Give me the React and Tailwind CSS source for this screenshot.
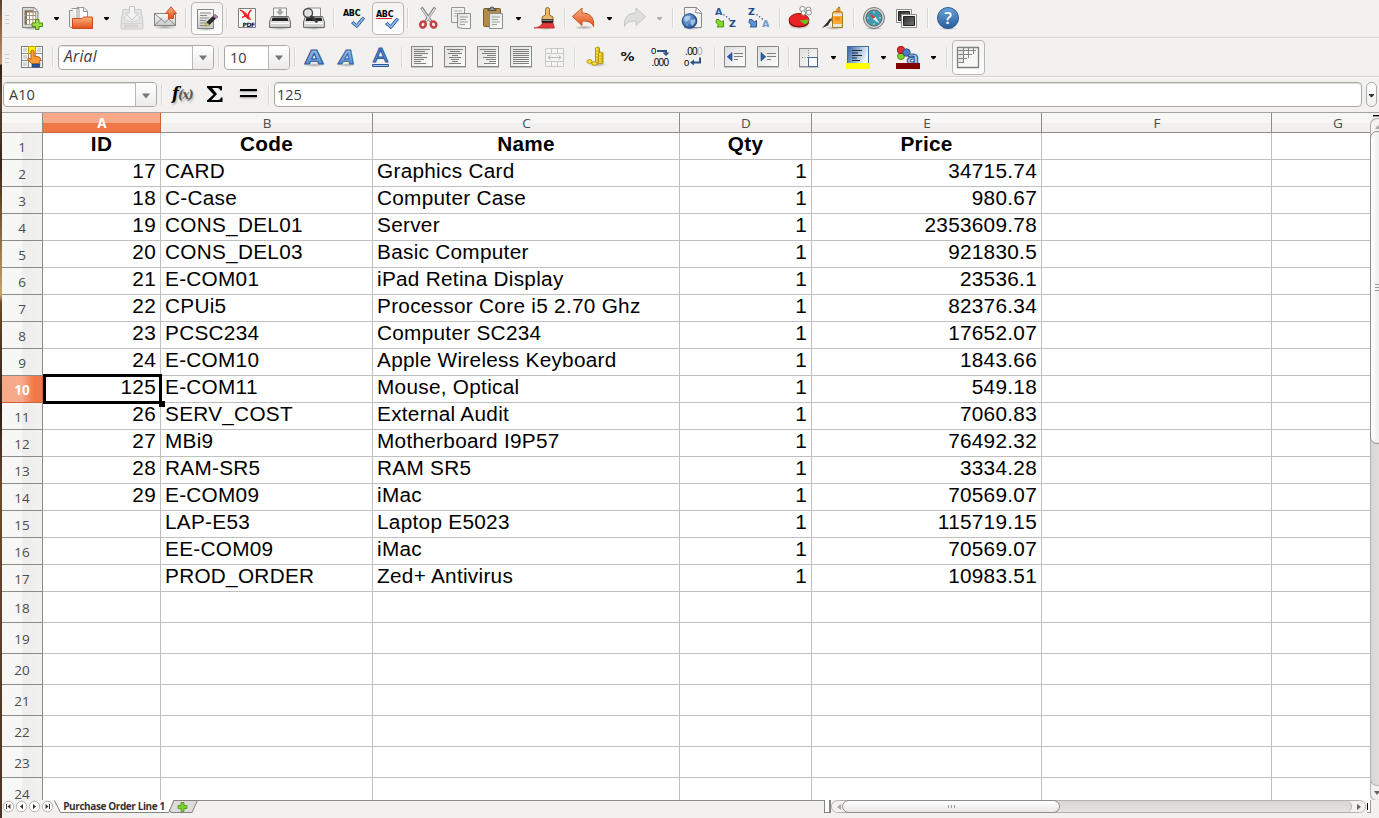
import React from "react";

const UI = "font-['Open_Sans','Noto_Sans',sans-serif]";

const Icon = ({ className = "", children }) => (
  <svg viewBox="0 0 24 24" className={`h-6 w-6 shrink-0 overflow-visible ${className}`} fill="none">
    {children}
  </svg>
);
const Grip = () => (
  <div className="ml-[3px] flex w-1 shrink-0 flex-col gap-[3px] pt-[3px]">
    <i className="h-px bg-[#cfcdca]" /><i className="h-px bg-[#cfcdca]" /><i className="h-px bg-[#cfcdca]" />
  </div>
);
const Sep = ({ className = "" }) => (
  <div className={`h-5 w-[2px] shrink-0 border-l border-r border-l-[#d8d6d3] border-r-[#f9f9f8] ${className}`} />
);
const Arrow = ({ className = "", fill = "#000" }) => (
  <svg viewBox="0 0 8 6" className={`-mt-px h-[6px] w-2 shrink-0 ${className}`}><path d="M2 2h5v1L5 5.2H4L2 3z" fill={fill} /></svg>
);
const Tri = () => (
  <svg viewBox="0 0 10 6" className="h-[6px] w-[10px]"><path d="M1 .5h8L5 5.6z" fill="#777" /></svg>
);
const Toggle = ({ className = "", children }) => (
  <div className={`-mb-px flex shrink-0 items-center justify-center rounded-[4px] border border-[#bab7b3] bg-gradient-to-b from-[#f4f3f2] to-[#fdfdfd] ${className}`}>
    {children}
  </div>
);
const Combo = ({ className = "", arrow = "w-[21px]", children }) => (
  <div className={`flex h-[25px] shrink-0 overflow-hidden rounded-[4px] border border-[#aba8a4] bg-white ${className}`}>
    <div className="flex min-w-0 flex-1 items-center pl-[5px] text-[#3c3c3c] shadow-[inset_0_1px_1px_#ddd]">{children}</div>
    <div className={`flex shrink-0 items-center justify-center border-l border-[#bbb8b4] bg-gradient-to-b from-white to-[#ecebea] pt-[2px] ${arrow}`}><Tri /></div>
  </div>
);

const Defs = () => (
  <svg className="absolute h-0 w-0">
    <defs>
      <linearGradient id="or" x1="0" y1="0" x2="0" y2="1"><stop offset="0" stopColor="#fbb184" /><stop offset="1" stopColor="#e2521b" /></linearGradient>
      <linearGradient id="gr" x1="0" y1="0" x2="0" y2="1"><stop offset="0" stopColor="#fbfbfb" /><stop offset="1" stopColor="#c9c9c9" /></linearGradient>
      <linearGradient id="doc" x1="0" y1="0" x2="1" y2="1"><stop offset="0" stopColor="#dcdeda" /><stop offset="1" stopColor="#fff" /></linearGradient>
      <linearGradient id="bl" x1="0" y1="0" x2="0" y2="1"><stop offset="0" stopColor="#a9c8ec" /><stop offset="1" stopColor="#4b84c6" /></linearGradient>
      <linearGradient id="bw" x1="0" y1="0" x2="1" y2="0.3"><stop offset="0" stopColor="#2f62a5" /><stop offset="1" stopColor="#f4f8fc" /></linearGradient>
      <linearGradient id="hp" x1="0" y1="0" x2="0" y2="1"><stop offset="0" stopColor="#6aa3d8" /><stop offset="1" stopColor="#285d98" /></linearGradient>
      <linearGradient id="dk" x1="0" y1="0" x2="1" y2="1"><stop offset="0" stopColor="#2c2c2c" /><stop offset="1" stopColor="#777" /></linearGradient>
      <linearGradient id="ye" x1="0" y1="0" x2="1" y2="0"><stop offset="0" stopColor="#fff36b" /><stop offset="1" stopColor="#d5ae00" /></linearGradient>
      <radialGradient id="gl" cx=".35" cy=".35" r=".7"><stop offset="0" stopColor="#8fb9e8" /><stop offset="1" stopColor="#1e4f93" /></radialGradient>
      <radialGradient id="sh"><stop offset="0" stopColor="#000" stopOpacity=".3" /><stop offset="1" stopColor="#000" stopOpacity="0" /></radialGradient>
    </defs>
  </svg>
);

const Check = () => (
  <path d="M9.500 17.200l2.200-1.700 2.800 2.800 6-7.100 2.100 1.300-7.500 9.200z" fill="#8ab4e5" stroke="#2c5ca0" strokeWidth="1" strokeLinejoin="round" />
);
const Printer = () => (
  <>
    <ellipse cx="12" cy="22" rx="11" ry="2" fill="url(#sh)" />
    <path d="M5.500 2h13v11h-13z" fill="#f7f7f7" stroke="#8d8f8a" />
    <path d="M3.500 10.500L1.500 16v5.500h21V16l-2-5.500z" fill="url(#gr)" stroke="#6c6e69" />
    <path d="M4.500 11.500h15l1 3.500H3.500z" fill="#242424" />
    <path d="M3 17.500h18" stroke="#fff" />
  </>
);
const Align = ({ rows, className = "" }) => (
  <Icon className={className}>
    <path d="M1 22.500h22" stroke="#c6c4c2" />
    <rect x="1.500" y="1.500" width="21" height="20" fill="url(#doc)" stroke="#858883" />
    {rows.map(([a, b], i) => <path key={i} d={`M${a} ${4.5 + i * 2}H${b}`} stroke="#7c7f7a" />)}
  </Icon>
);
const SheetLines = () => <path d="M1.500 1.500h21v20h-21z" fill="url(#doc)" stroke="#858883" />;
const SortIcon = ({ a, b, arrowFill, arrowStroke, ca, cb, className }) => (
  <Icon className={className}>
    <text x="1" y="8.500" fontFamily="DejaVu Sans" fontWeight="bold" fontSize="9.500" fill={ca}>{a}</text>
    <text x="15" y="21" fontFamily="DejaVu Sans" fontWeight="bold" fontSize="9.500" fill={cb}>{b}</text>
    <path d="M9.500 8.500l7 5.500" stroke="#2a4f86" strokeWidth="1.300" strokeDasharray="1.300 2" />
    <path d="M2.500 13.500h2.500l2.500 2.500 2-1.500v6.500h-6.500l1.500-2-2.500-2.500z" fill={arrowFill} stroke={arrowStroke} strokeWidth=".9" />
  </Icon>
);

const Help = () => (
  <Icon className="ml-[7px]">
    <ellipse cx="12" cy="22.500" rx="10" ry="1.500" fill="url(#sh)" />
    <circle cx="12" cy="12" r="10.500" fill="url(#hp)" stroke="#285a93" />
    <text x="12" y="18" textAnchor="middle" fontFamily="Open Sans" fontWeight="600" fontSize="17" fill="#fff">?</text>
  </Icon>
);

const TopBar = () => (
  <div className="flex h-[38px] items-center border-b border-[#d3d1ce] pb-px">
    <Grip />
    <Icon className="ml-[11px]">
      <ellipse cx="11" cy="22" rx="10" ry="2" fill="url(#sh)" />
      <path d="M2.500 1.500h12l3.500 4v16h-15.500z" fill="#d6d7d3" stroke="#82847f" />
      <path d="M4.500 4.500h11v14h-11z" fill="#fff" stroke="#a8aaa5" />
      <path d="M5 5.500h11M6 5v13.500" stroke="#8a7050" strokeWidth="2" />
      <path d="M9.500 5v13M13 5v13M5 9.500h11M5 13.500h11" stroke="#a29278" />
      <path d="M13.500 1.500l4.500 4h-4.500z" fill="#fff" stroke="#92948f" strokeWidth=".7" />
      <path d="M15.500 13.500h3.500v3.500h3.500v3.500h-3.500v3h-3.500v-3h-3.500v-3.500h3.500z" fill="#9edb45" stroke="#4c8c12" />
    </Icon>
    <Arrow className="ml-2" />
    <Icon className="ml-[9px]">
      <path d="M.5 4.500h10v17H2q-1.500 0-1.500-2z" fill="#ececeb" stroke="#8e8e8a" />
      <path d="M2.500 2.500h7.500v12M8 1.500h7l3.500 3.500v8H8z" fill="#fff" stroke="#999b96" />
      <path d="M14.500 1.500v4h4" stroke="#999b96" />
      <path d="M3.500 22.500v-10h9.500l1.500-1.500h8.500l.5 1v10.500z" fill="url(#or)" stroke="#cd4a18" />
    </Icon>
    <Arrow className="ml-[9px]" />
    <Icon className="ml-[10px]">
      <g opacity=".55">
        <path d="M3 3.500h18l2 14.500v4q0 1-1 1H2q-1 0-1-1v-4z" fill="#ddd" stroke="#adadab" />
        <path d="M1.500 17.500h21" stroke="#bbb" /><rect x="4" y="18.500" width="14" height="3" fill="#bcbcba" />
        <ellipse cx="12" cy="12" rx="7.500" ry="3.500" fill="#eee" stroke="#bbb" />
        <path d="M9.500.5h5v6.500h4L12 14 5.500 7h4z" fill="#f8f8f8" stroke="#a8a8a6" />
      </g>
    </Icon>
    <Icon className="ml-[9px]">
      <ellipse cx="12" cy="21" rx="12" ry="2.500" fill="url(#sh)" />
      <rect x="1.500" y="7.500" width="21" height="12" fill="url(#gr)" stroke="#858782" />
      <path d="M2 19l7-6.500M22 19l-7-6.500M2 8l10 8.500L22 8" stroke="#888" />
      <path d="M15.500 12.500v-5h-3L18 .8l5.500 6.700h-3v5z" fill="url(#or)" stroke="#d5501d" />
    </Icon>
    <Sep className="ml-2" />
    <Toggle className="ml-1 h-[33px] w-8">
      <Icon>
        <ellipse cx="11" cy="22" rx="10" ry="2" fill="url(#sh)" />
        <path d="M2.500 2.500h16v19h-16z" fill="url(#gr)" stroke="#858782" />
        <path d="M5 6h11M5 8.500h7M5 11h9M5 13.500h6M5 16h8M5 18.500h5" stroke="#8a8c88" />
        <path d="M10.500 19l1-4L18 9l3 2.500-6.500 6.500z" fill="#2a2a2a" />
        <path d="M10.200 19.300l1.300-4 3 2.700z" fill="#e9d35b" stroke="#8a7a2a" strokeWidth=".5" />
        <path d="M18 9l2-1.700 3 2.500-2 1.700z" fill="#c878b8" stroke="#774470" strokeWidth=".6" />
      </Icon>
    </Toggle>
    <Sep className="ml-[3px]" />
    <Icon className="ml-[7px]">
      <path d="M3.500 2.500h17v19h-17z" fill="#fafafa" stroke="#7e807b" />
      <path d="M5 4c4 1 8 4.500 10.500 9.500-3-.5-5-2.500-6-4.500C8.500 7 7 5 5 4z" fill="#e22" stroke="#e22" />
      <path d="M16.500 4c-2 1-3.500 4-3 6.500M12 8c-2 2-3 3-5 3.500" stroke="#e22" strokeWidth="1.500" />
      <text x="7.500" y="20.500" fontFamily="DejaVu Sans" fontWeight="bold" fontSize="6" fill="#111" textLength="12.500">PDF</text>
    </Icon>
    <Icon className="ml-[9px]"><Printer /><path d="M10.500 3h3v2.500H16L12 9.500 8 5.500h2.500z" fill="#a4a6a2" /></Icon>
    <Icon className="ml-[10px]">
      <Printer /><circle cx="6" cy="7" r="4.500" fill="#dfe3e6" fillOpacity=".85" stroke="#4b4b4b" strokeWidth="1.500" /><path d="M9.500 10.500l5 5" stroke="#3a3a3a" strokeWidth="2.500" strokeLinecap="round" />
    </Icon>
    <Sep className="ml-[7px]" />
    <Icon className="ml-[7px]">
      <text x="1" y="9.500" fontFamily="DejaVu Sans" fontWeight="bold" fontSize="8" fill="#000" textLength="17.500">ABC</text><Check />
    </Icon>
    <Toggle className="ml-[6px] h-[33px] w-8">
      <Icon>
        <text x="0" y="9.500" fontFamily="DejaVu Sans" fontWeight="bold" fontSize="8" fill="#000" textLength="17.500">ABC</text>
        <path d="M0 11l1 1 1-1 1 1 1-1 1 1 1-1 1 1 1-1 1 1 1-1 1 1 1-1 1 1 1-1 1 1 1-1" stroke="#d11" strokeWidth=".9" /><Check />
      </Icon>
    </Toggle>
    <Sep className="ml-[3px]" />
    <Icon className="ml-2">
      <path d="M4.500 1.500l9.500 14M18 1.500l-9.500 14" stroke="#808280" strokeWidth="3" />
      <path d="M4.800 2.500l9 13M17.700 2.500l-9 13" stroke="#e9e9e8" strokeWidth="1.300" />
      <ellipse cx="6" cy="18.500" rx="2.700" ry="3.100" stroke="#c5403d" strokeWidth="2.500" transform="rotate(25 6 18.500)" />
      <ellipse cx="16.500" cy="18.500" rx="2.700" ry="3.100" stroke="#c5403d" strokeWidth="2.500" transform="rotate(-25 16.500 18.500)" />
    </Icon>
    <Icon className="ml-2">
      <path d="M2.500 1.500h13v15h-13z" fill="#f2f2f1" stroke="#969893" /><path d="M5 5h8M5 7.500h8M5 10h3" stroke="#b0b2ae" />
      <path d="M8.500 7.500h13v15h-8l-5-1z" fill="url(#doc)" stroke="#8c8e89" /><path d="M11 11h8M11 13.500h6M11 16h8M11 18.500h5" stroke="#a3a5a0" />
    </Icon>
    <Icon className="ml-2">
      <rect x="2.500" y="2.500" width="17" height="18" rx="1" fill="#b48a4b" stroke="#7d5b28" />
      <path d="M7 4.500V3h2q0-2 2-2t2 2h2v1.500z" fill="#909290" stroke="#4d4f4c" />
      <path d="M8.500 7.500h13v15h-13z" fill="url(#doc)" stroke="#8c8e89" /><path d="M11 11h8M11 13.500h6M11 16h8M11 18.500h5" stroke="#a3a5a0" />
    </Icon>
    <Arrow className="ml-[9px]" />
    <Icon className="ml-[11px]">
      <ellipse cx="13" cy="22" rx="10" ry="2" fill="url(#sh)" />
      <path d="M12.500 9V3.500q0-2 2-2t2 2V9l3.500 2v3h-11v-3z" fill="#e9b66a" stroke="#9a6a26" />
      <path d="M9 13.500h11v3h-11z" fill="#ececec" stroke="#444" /><path d="M9 14.500h11v2.500h-11z" fill="#222" />
      <path d="M9.500 17H20l1.500 5H1c4-.5 7-2 8.500-5z" fill="#e23a3a" stroke="#b81d1d" strokeWidth=".6" />
    </Icon>
    <Sep className="ml-[7px]" />
    <Icon className="ml-[6px]">
      <ellipse cx="12" cy="21.500" rx="10" ry="2" fill="url(#sh)" />
      <path d="M.5 10.500L10 2v5c8 0 12.500 4.500 11.500 13.500-1.500-4-5-5.500-11.500-5.500v4.500z" fill="url(#or)" stroke="#c4541e" strokeLinejoin="round" />
    </Icon>
    <Arrow className="ml-[9px]" />
    <Icon className="ml-[10px]">
      <path d="M22.500 10.500L13 2v5C5 7 .5 11.500 1.500 20.500c1.500-4 5-5.500 11.500-5.500v4.500z" fill="#dfdfde" stroke="#c5c5c3" strokeLinejoin="round" />
    </Icon>
    <Arrow className="ml-2" fill="#b3b1af" />
    <Sep className="ml-[9px]" />
    <Icon className="ml-[6px]">
      <ellipse cx="12" cy="22" rx="10" ry="2" fill="url(#sh)" />
      <path d="M4.500 1.500h12l5 5v15h-17z" fill="#f2f2f1" stroke="#858782" /><path d="M16.500 1.500l-1 5 6 1" fill="#fff" stroke="#858782" />
      <circle cx="9.500" cy="15" r="7.300" fill="url(#gl)" stroke="#1d4787" />
      <path d="M4 11.500q3-3 6.500-1l-1 3-3 2-2-1zM11 14l4-1 .5 3-3 4-2-2zM6 17l2 2-1 1z" fill="#c4dbf3" fillOpacity=".7" />
    </Icon>
    <SortIcon className="ml-[10px]" a="A" b="Z" arrowFill="#7fdb28" arrowStroke="#438c0c" ca="#2f5c9c" cb="#1f4a88" />
    <SortIcon className="ml-[9px]" a="Z" b="A" arrowFill="#5d93d8" arrowStroke="#1f4a88" ca="#1f4a88" cb="#6e9bd2" />
    <Sep className="ml-2" />
    <Icon className="ml-[7px]">
      <ellipse cx="11" cy="20.500" rx="11" ry="3" fill="url(#sh)" />
      <path d="M1 14v2.500c1 6.500 19 6.500 20 0V14z" fill="#8e0f0f" />
      <ellipse cx="11" cy="14" rx="10" ry="6.500" fill="#ea2424" stroke="#a01010" /><path d="M11.500 14.500l9.500-1q-.5 3.500-4 5z" fill="#62c71c" />
      <circle cx="14.500" cy="3" r="2.700" fill="#fff" stroke="#8c8e89" /><circle cx="20.500" cy="3.500" r="2.400" fill="#fff" stroke="#8c8e89" /><circle cx="15.500" cy="7" r="2.200" fill="#fff" stroke="#8c8e89" /><circle cx="21" cy="6.500" r="2.500" fill="#fff" stroke="#8c8e89" />
    </Icon>
    <Icon className="ml-[9px]">
      <ellipse cx="13" cy="22" rx="10" ry="2" fill="url(#sh)" />
      <path d="M18.500 1l-9 14" stroke="#a66a2c" strokeWidth="2" /><path d="M10.500 13.500L7 19.500 1 22l4.500-5 3.500-4.500z" fill="#333" />
      <path d="M14.500 5.500h5v-3h-4z" fill="#e7942c" /><path d="M11.500 7.500q0-2 2-2h6q2 0 2 2v14h-10z" fill="#f3a93c" stroke="#a8771f" /><path d="M12 7.500h9v2.500h-9zM12 18h9v3h-9z" fill="#e4e4e2" /><path d="M14 11h5v3.500h-5z" fill="#f58a0d" />
    </Icon>
    <Sep className="ml-2" />
    <Icon className="ml-[7px]">
      <ellipse cx="12" cy="22.500" rx="10" ry="1.500" fill="url(#sh)" />
      <circle cx="12" cy="12" r="10.500" fill="#d2d3d1" stroke="#7b7d79" /><circle cx="12" cy="12" r="8" fill="#3c9bb0" stroke="#5d6665" />
      <path d="M12 5v2M12 17v2M5 12h2M17 12h2" stroke="#c4e6ec" />
      <path d="M6.500 6.500l7 4.500-2.500 2z" fill="#e03c3c" /><path d="M17.500 17.500l-4-6.500-2.500 2z" fill="#f1f3f3" />
    </Icon>
    <Icon className="ml-[9px]">
      <path d="M1.500 3.500h15v13h-15z" fill="#fdfdfd" stroke="#8d8f8b" /><path d="M3.500 5.500h11v9h-11z" fill="url(#dk)" stroke="#222" />
      <path d="M6.500 8.500h15v13h-15z" fill="#fdfdfd" stroke="#8d8f8b" /><path d="M8.500 10.500h11v9h-11z" fill="url(#dk)" stroke="#222" />
    </Icon>
    <Sep className="ml-2" />
    <Help />
  </div>
);

const FormatBar = () => (
  <div className="flex h-[39px] items-center border-t border-b border-t-[#fbfbfa] border-b-[#d3d1ce] pb-px">
    <Grip />
    <Icon className="ml-[11px]">
      <rect x="1.500" y="1.500" width="21" height="21" fill="#fbfbfb" stroke="#7c7e79" />
      <path d="M3 3h4v4H3zM17 3h4v4h-4zM3 10h4v4H3zM3 17h4v4H3zM17 17h4v4h-4z" fill="#d4d6d2" />
      <path d="M8.500 2v20M15.500 2v20M2 8.500h20M2 15.500h20" stroke="#8a8c87" />
      <rect x="8.500" y="1.500" width="7" height="7" fill="#fff200" stroke="#c7a500" />
      <path d="M11 14V6q1.500-1.500 3 0v5l5 1q1.500.5 1.500 2l-1.500 5h-7l-4.500-5q1-1.500 2-.5z" fill="#ff9b33" stroke="#cb5d10" />
      <path d="M12 19h7.500v3H12z" fill="#285a9c" stroke="#17396b" strokeWidth=".7" />
    </Icon>
    <Sep className="ml-2" />
    <Combo className="ml-1 w-[156px]"><span className="text-[15.5px] tracking-[0.3px] italic">Arial</span></Combo>
    <Sep className="ml-1" />
    <Combo className="ml-1 w-[66px]"><span className="pt-px text-[14.5px]">10</span></Combo>
    <Sep className="ml-1" />
    <Icon className="ml-[6px]">
      <ellipse cx="12" cy="20" rx="11" ry="2" fill="url(#sh)" />
      <text x="2.500" y="18.500" fontFamily="DejaVu Sans" fontWeight="bold" fontSize="19" textLength="19" lengthAdjust="spacingAndGlyphs" fill="url(#bl)" stroke="#2a5a9e" strokeWidth=".9">A</text>
    </Icon>
    <Icon className="ml-[10px]">
      <ellipse cx="11" cy="20" rx="9" ry="2" fill="url(#sh)" />
      <text x="3" y="18.500" fontFamily="DejaVu Sans" fontStyle="italic" fontWeight="bold" fontSize="19" textLength="16" lengthAdjust="spacingAndGlyphs" fill="url(#bl)" stroke="#2a5a9e" strokeWidth=".9">A</text>
    </Icon>
    <Icon className="ml-[9px]">
      <text x="4" y="16.500" fontFamily="DejaVu Sans" fontSize="19" textLength="15" lengthAdjust="spacingAndGlyphs" fill="#6b9cd6" stroke="#2a5a9e" strokeWidth="1">A</text>
      <path d="M3.500 19.500h16v2h-16z" fill="#9ec1ea" stroke="#2a5a9e" />
    </Icon>
    <Sep className="ml-2" />
    <Align className="ml-[7px]" rows={[[4, 20], [4, 15], [4, 18], [4, 12], [4, 17], [4, 14], [4, 11], [4, 16]]} />
    <Align className="ml-[9px]" rows={[[4, 20], [7, 17], [5, 19], [9, 15], [6, 18], [8, 16], [9, 15], [6, 18]]} />
    <Align className="ml-[9px]" rows={[[4, 20], [8, 20], [6, 20], [11, 20], [7, 20], [10, 20], [13, 20], [8, 20]]} />
    <Align className="ml-[9px]" rows={[[4, 20], [4, 20], [4, 20], [4, 20], [4, 20], [4, 20], [4, 20], [4, 20]]} />
    <Icon className="ml-[10px]">
      <path d="M2.500 3.500h18v18h-18zM2.500 8.500h18M2.500 16.500h18M8.500 3.500v5m6-5v5m-6 8v5m6-5v5" fill="#f4f4f3" stroke="#c9c9c7" />
      <path d="M5 12.500h13M7.500 10.500l-2.500 2 2.500 2M15.500 10.500l2.500 2-2.500 2" stroke="#b9b9b7" />
    </Icon>
    <Sep className="ml-[7px]" />
    <Icon className="ml-2">
      <ellipse cx="13" cy="19.500" rx="10" ry="2.500" fill="url(#sh)" />
      <path d="M11.500 3q2-2 4 0v15h-4z" fill="url(#ye)" stroke="#b39300" /><path d="M14.500 8q2-2 4.500 0v10q-2.500 1.500-4.500 0z" fill="url(#ye)" stroke="#b39300" />
      <path d="M12 6h3M12 9h3M12 12h3M12 15h3M15 11h4M15 13.500h4M15 16h4" stroke="#c1a000" strokeWidth=".6" />
      <ellipse cx="5.500" cy="16.500" rx="2.600" ry="1.800" fill="#ffe633" stroke="#b39300" /><ellipse cx="10.500" cy="18.500" rx="2.600" ry="1.800" fill="#ffe633" stroke="#b39300" />
    </Icon>
    <Icon className="ml-2"><text x="4.500" y="16" fontFamily="DejaVu Sans" fontWeight="bold" fontSize="13" textLength="14" lengthAdjust="spacingAndGlyphs" fill="#111">%</text></Icon>
    <Icon className="ml-[9px] [font-family:'Liberation_Sans']">
      <text x="2" y="9" fontSize="9.500" fill="#000">0</text><text x="2.500" y="20.500" fontSize="10" textLength="17.500" fill="#000">.000</text>
      <path d="M8 5h10v2.500h2.500L17 11l-3.500-3.500H16V7H8z" fill="#31537f" />
    </Icon>
    <Icon className="ml-[9px] [font-family:'Liberation_Sans']">
      <text x="3" y="9.500" fontSize="10" textLength="17.500" fill="#000">.00<tspan fill="#aaa">0</tspan></text><text x="2" y="20.500" fontSize="9.500" fill="#000">0</text>
      <path d="M19 12.500v6h-7v2l-4-3 4-3v2h5v-4z" fill="#31537f" />
    </Icon>
    <Sep className="ml-2" />
    <Icon className="ml-[7px]"><path d="M1 22.500h22" stroke="#c6c4c2" /><SheetLines /><path d="M9 7.500v8.500l-4.800-4.200z" fill="#2b5ea6" stroke="#1d4582" strokeWidth=".6" /><path d="M11 8.500h9M11 11.500h9M11 14.500h4" stroke="#7c7f7a" /></Icon>
    <Icon className="ml-[9px]"><path d="M1 22.500h22" stroke="#c6c4c2" /><SheetLines /><path d="M5 7.500v8.500l4.800-4.200z" fill="#2b5ea6" stroke="#1d4582" strokeWidth=".6" /><path d="M11 8.500h9M11 11.500h9M11 14.500h4" stroke="#7c7f7a" /></Icon>
    <Sep className="ml-2" />
    <Icon className="ml-[7px]">
      <path d="M2 22.500h20" stroke="#c6c4c2" /><rect x="2.500" y="3.500" width="18" height="18" fill="url(#doc)" stroke="#8a8c87" />
      <path d="M11.500 5v16M5 12.500h16" stroke="#7c7f7a" strokeDasharray="1 1.500" /><rect x="11.500" y="12.500" width="9" height="9" fill="#fff" stroke="#41699e" />
    </Icon>
    <Arrow className="ml-2" />
    <Icon className="ml-[9px]">
      <rect x="1.500" y="1.500" width="21" height="18" fill="url(#bw)" stroke="#436b9f" />
      <path d="M6 5.500h10M6 8h6M6 10.500h10M6 13h5M6 15.500h8" stroke="#1c2a3a" /><path d="M0 18h24v6H0z" fill="#ff0" />
    </Icon>
    <Arrow className="ml-[9px]" />
    <Icon className="ml-[9px]">
      <circle cx="5" cy="11" r="3.500" fill="#7ed321" stroke="#4b9010" /><circle cx="5" cy="5" r="3.700" fill="#e22b2b" stroke="#a71414" /><circle cx="10.500" cy="7.500" r="3.700" fill="#4f7fc2" stroke="#2a5290" />
      <text x="10.500" y="18.500" fontFamily="DejaVu Sans" fontWeight="bold" fontSize="18" textLength="12.500" lengthAdjust="spacingAndGlyphs" fill="#a5c5ec" stroke="#2c568f">a</text>
      <path d="M0 18h24v6H0z" fill="#820000" />
    </Icon>
    <Arrow className="ml-[9px]" />
    <Sep className="ml-[9px]" />
    <Toggle className="ml-1 h-[35px] w-[33px]">
      <Icon className="-ml-px">
        <path d="M1.500 1.500h21v20h-21z" fill="#f7f8f6" stroke="#7e807b" strokeWidth="1.300" />
        <path d="M2 2h6v14H2z" fill="#e2e4e0" /><path d="M2 4.500h18M2 8.500h14M2 12.500h9M2 16.500h6M7.500 2v15M12.500 2v10M17.500 2v6" stroke="#868883" />
      </Icon>
    </Toggle>
  </div>
);

const FormulaBar = () => (
  <div className="flex h-9 items-center border-t border-b border-t-[#fbfbfa] border-b-[#a5a39f] pb-px">
    <Combo className="ml-px w-[154px]" arrow="w-[21px]"><span className="text-[14.5px]">A10</span></Combo>
    <Sep className="ml-1" />
    <div className="-mt-px ml-[9px] flex w-[22px] shrink-0 items-baseline font-['DejaVu_Serif',serif] leading-none italic [text-shadow:1px_2px_2px_#bbb]">
      <span className="text-[16px] font-bold text-black">f</span><span className="-ml-px text-[12px] font-bold tracking-[-1.3px] text-[#5b5954]">(x)</span>
    </div>
    <svg viewBox="0 0 18 18" className="-mt-px ml-3 h-[18px] w-[18px] shrink-0">
      <path d="M1 1h15v4.500h-1.500Q14 3 11.500 3H6l5 6-5.500 6H12q2.500 0 3-2.500h1.500V17H1v-1.500L7.500 9.500 1 2.500z" fill="#000" />
    </svg>
    <div className="-mt-[3px] ml-4 flex h-[8px] w-[17px] shrink-0 flex-col justify-between">
      <i className="h-[2px] bg-black shadow-[0_1px_2px_#999]" /><i className="h-[2px] bg-black shadow-[0_1px_2px_#999]" />
    </div>
    <Sep className="ml-[11px]" />
    <div className="ml-1 flex h-[25px] w-[1088px] shrink-0 items-center rounded-[4px] border border-[#aba8a4] bg-white pl-[2px] text-[14.5px] text-[#3c3c3c] shadow-[inset_0_1px_1px_#ddd]">125</div>
    <div className="ml-1 flex h-[25px] w-[11px] shrink-0 items-center justify-center rounded-[5px] border border-[#b0adaa] bg-gradient-to-b from-white to-[#f0efee]">
      <Arrow className="mt-px -ml-px" fill="#333" />
    </div>
  </div>
);

const rows = [
  ["17", "CARD", "Graphics Card", "34715.74"],
  ["18", "C-Case", "Computer Case", "980.67"],
  ["19", "CONS_DEL01", "Server", "2353609.78"],
  ["20", "CONS_DEL03", "Basic Computer", "921830.5"],
  ["21", "E-COM01", "iPad Retina Display", "23536.1"],
  ["22", "CPUi5", "Processor Core i5 2.70 Ghz", "82376.34"],
  ["23", "PCSC234", "Computer SC234", "17652.07"],
  ["24", "E-COM10", "Apple Wireless Keyboard", "1843.66"],
  ["125", "E-COM11", "Mouse, Optical", "549.18"],
  ["26", "SERV_COST", "External Audit", "7060.83"],
  ["27", "MBi9", "Motherboard I9P57", "76492.32"],
  ["28", "RAM-SR5", "RAM SR5", "3334.28"],
  ["29", "E-COM09", "iMac", "70569.07"],
  ["", "LAP-E53", "Laptop E5023", "115719.15"],
  ["", "EE-COM09", "iMac", "70569.07"],
  ["", "PROD_ORDER", "Zed+ Antivirus", "10983.51"],
];
const COLS = "grid grid-cols-[41px_118px_212px_307px_132px_230px_230px_132px]";

const RowHead = ({ n, on }) => (
  <div className={`flex items-center justify-center border-r border-b pt-[4px] text-[13.5px] leading-none tracking-normal ${on
    ? "border-r-[#cc6238] border-b-[#cc6238] bg-[linear-gradient(90deg,#f7a98a_50%,#f07746_80%)] font-bold text-white"
    : "border-r-[#8d8c86] border-b-[#8d8c86] bg-[linear-gradient(90deg,#f7f7f6_50%,#efeeed_51%,#f2f1f0)] text-[#4c4c4c]"}`}>
    {n}
  </div>
);
const Cell = ({ right, center, bold, selected, children }) => (
  <div className={`relative flex items-start border-r border-b border-[#c0c0c0] px-1 leading-6 ${right ? "justify-end" : ""} ${center ? "justify-center" : ""} ${bold ? "font-bold" : ""} ${selected ? "z-10" : ""}`}>
    <span className="-mt-px whitespace-pre">{children}</span>
    {selected && (
      <>
        <div className="absolute -top-[2px] -right-[2px] -bottom-[2px] left-0 border-[3px] border-black" />
        <div className="absolute -right-[5px] -bottom-[5px] h-[6px] w-[6px] bg-black" />
      </>
    )}
  </div>
);

const Sheet = () => (
  <div className="h-[688px] w-[1368px] shrink-0 overflow-hidden bg-white">
    <div className={`${COLS} h-5 text-[13.5px] text-[#4c4c4c]`}>
      {["", "A", "B", "C", "D", "E", "F", "G"].map((c) => (
        <div key={c} className={`flex items-center justify-center border-r border-b pt-[2px] pl-px leading-none ${c === "A"
          ? "border-[#cc6238] bg-[linear-gradient(#f7a98a_50%,#f07746_51%)] font-bold text-white"
          : "border-[#8d8c86] bg-[linear-gradient(#f7f7f6_50%,#f1f0ef_51%)]"}`}>{c}</div>
      ))}
    </div>
    <div className="font-['Liberation_Sans',Arial,sans-serif] text-[20.75px] tracking-[0.29px] text-black">
      <div className={`${COLS} h-[27px]`}>
        <div className={`grid ${UI}`}><RowHead n="1" /></div>
        {["ID", "Code", "Name", "Qty", "Price", "", ""].map((h, i) => <Cell key={i} center bold>{h}</Cell>)}
      </div>
      {rows.map((r, i) => (
        <div key={i} className={`${COLS} h-[27px]`}>
          <div className={`grid ${UI}`}><RowHead n={i + 2} on={i === 8} /></div>
          <Cell right selected={i === 8}>{r[0]}</Cell>
          <Cell>{r[1]}</Cell><Cell>{r[2]}</Cell><Cell right>1</Cell><Cell right>{r[3]}</Cell><Cell /><Cell />
        </div>
      ))}
      {[18, 19, 20, 21, 22, 23, 24].map((n) => (
        <div key={n} className={`${COLS} h-[31px]`}>
          <div className={`grid ${UI}`}><RowHead n={n} /></div>
          {[0, 1, 2, 3, 4, 5, 6].map((c) => <Cell key={c} />)}
        </div>
      ))}
    </div>
  </div>
);

const VScroll = () => (
  <div className="flex w-[9px] shrink-0 flex-col overflow-hidden bg-[#f2f1f0]">
    <div className="mt-[2px] ml-[3px] h-[2px] shrink-0 border-b border-[#999] bg-black" />
    <div className="mt-px flex h-[26px] w-[14px] shrink-0 justify-center rounded-t-[7px] border border-b-0 border-[#aaa8a4] bg-[#f4f3f2] pt-[6px] pl-px">
      <svg viewBox="0 0 6 4" className="h-1 w-[6px]"><path d="M0 4h6L3 0z" fill="#aaa" /></svg>
    </div>
    <div className="relative z-10 -mt-[13px] flex h-[313px] w-[14px] shrink-0 flex-col items-center justify-center gap-[2px] rounded-[7px] border border-[#8f8d89] bg-gradient-to-r from-white to-[#e7e6e5]">
      <i className="h-px w-1 bg-[#999]" /><i className="h-px w-1 bg-[#999]" /><i className="h-px w-1 bg-[#999]" />
    </div>
    <div className="-mt-2 h-[350px] w-[14px] shrink-0 rounded-b-[7px] border border-t-0 border-[#b5b2ae] bg-gradient-to-r from-[#d8d6d4] to-[#e6e4e2]" />
    <div className="-mt-[5px] flex h-[20px] w-[14px] shrink-0 items-center justify-center rounded-b-[7px] border border-t-0 border-[#b5b2ae] pt-[5px]">
      <svg viewBox="0 0 6 4" className="h-1 w-[6px]"><path d="M0 0h6L3 4z" fill="#666" /></svg>
    </div>
  </div>
);

const NavBtn = ({ d }) => (
  <svg viewBox="0 0 13 13" className="h-[13px] w-[13px] shrink-0">
    <circle cx="6.500" cy="6.500" r="5.200" fill="#fcfcfc" stroke="#b5b2ae" /><path d={d} fill="#333" />
  </svg>
);

const BottomBar = () => (
  <div className="flex h-[18px] bg-[#f2f1f0]">
    <div className="flex w-[52px] shrink-0">
      <NavBtn d="M4 4h1v5H4zM8.500 4v5L5.500 6.500z" />
      <NavBtn d="M8 4v5L5 6.500z" />
      <NavBtn d="M5 4v5l3-2.500z" />
      <NavBtn d="M8 4h1v5H8zM4.500 4v5l3-2.500z" />
    </div>
    <div className="flex h-[13px] w-[770px] shrink-0 border-t border-[#8d8c86]">
      <div className="-mt-px flex">
        <svg viewBox="0 0 9 13" className="h-[13px] w-[9px]"><path d="M0 0h9v12.500H6.500z" fill="#fff" /><path d="M.5.500L6.500 12.500H9" fill="none" stroke="#85837e" /></svg>
        <div className="flex h-[13px] w-[102px] items-center justify-center border-b border-[#85837e] bg-white text-[10px] leading-none font-bold tracking-[-0.4px] whitespace-nowrap text-[#333]">Purchase Order Line 1</div>
        <svg viewBox="0 0 34 13" className="h-[13px] w-[34px]">
          <path d="M8 .5h24.500L27 12.500H6L4 9z" fill="#dddcda" stroke="#85837e" />
          <path d="M0 0h8.500L3.500 12.500H0z" fill="#fff" /><path d="M0 12.500h3.500L9 .5" fill="none" stroke="#85837e" />
          <path d="M16 2.500h3v3h3v3h-3v3h-3v-3h-3v-3h3z" fill="#7ed12c" stroke="#429a0c" strokeWidth=".8" />
        </svg>
      </div>
    </div>
    <div className="flex h-[13px] w-[7px] shrink-0 border-r-2 border-b border-l border-[#85837e] bg-white" />
    <div className="flex h-[13px] w-[535px] shrink-0 rounded-[7px] border border-[#b5b2ae] bg-gradient-to-b from-[#d8d6d4] to-[#e6e4e2]">
      <div className="flex w-[15px] items-center rounded-l-[6px] bg-[#f2f1f0] pl-[5px]"><svg viewBox="0 0 4 6" className="h-[6px] w-1"><path d="M4 0v6L0 3z" fill="#aaa" /></svg></div>
      <div className="-my-px -ml-[5px] flex w-[218px] items-center justify-center gap-[2px] rounded-[7px] border border-[#8f8d89] bg-gradient-to-b from-white to-[#e9e8e7]">
        <i className="h-[3px] w-px bg-[#999]" /><i className="h-[3px] w-px bg-[#999]" /><i className="h-[3px] w-px bg-[#999]" />
      </div>
      <div className="flex flex-1 justify-end overflow-hidden rounded-r-[6px] bg-[linear-gradient(90deg,#dfdddb_50%,#f2f1f0_50%)]">
        <div className="flex-1 rounded-r-[6px] border-r border-[#b5b2ae] bg-gradient-to-b from-[#d8d6d4] to-[#e6e4e2]" />
        <div className="flex w-[13px] items-center justify-center"><svg viewBox="0 0 4 6" className="h-[6px] w-1"><path d="M0 0v6l4-3z" fill="#666" /></svg></div>
      </div>
    </div>
    <div className="ml-px flex h-[13px] w-[4px] shrink-0 items-center border-r border-b border-[#999] bg-white"><i className="h-[7px] w-px bg-black" /></div>
  </div>
);

export default function App() {
  return (
    <div className={`flex h-[818px] w-[1379px] overflow-hidden bg-[#f2f1f0] ${UI}`}>
      <Defs />
      <div className="w-[2px] shrink-0 bg-[linear-gradient(#5a4130,#a98260_6%,#b98f6b_7.8%,#2b1d15_8%,#5a4534_12%,#3a2415_20%,#c9a46a_36%,#6a4a2c_37%,#2c1d14_50%,#6a4a30_60%,#4a3322)]" />
      <div className="flex min-w-0 flex-1 flex-col">
        <TopBar />
        <FormatBar />
        <FormulaBar />
        <div className="flex h-[687px] shrink-0 overflow-hidden"><Sheet /><VScroll /></div>
        <BottomBar />
      </div>
    </div>
  );
}
